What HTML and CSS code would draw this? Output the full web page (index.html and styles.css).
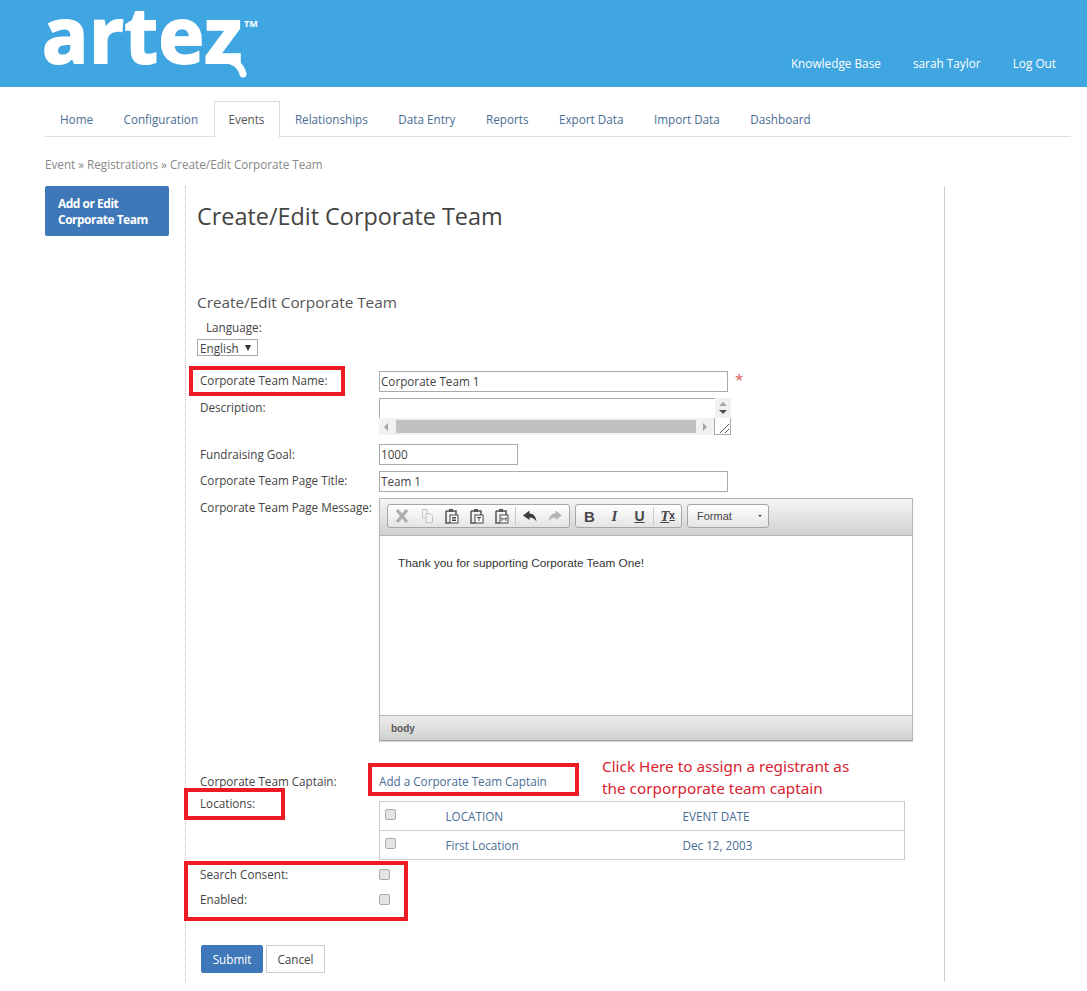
FILE: index.html
```html
<!DOCTYPE html>
<html lang="en">
<head>
    <meta charset="UTF-8">
    <title>Create/Edit Corporate Team</title>
    <link rel="stylesheet" href="styles.css">
</head>
<body>

    <header class="top-bar">
        <div class="logo">
            <span class="logo-word">artez</span>
            <svg class="logo-tail" width="34" height="26" viewBox="0 0 34 26"><path d="M4 3 C12 3 20 8 22 17" fill="none" stroke="#fff" stroke-width="7" stroke-linecap="round"/></svg>
            <span class="logo-tm">TM</span>
        </div>
        <nav class="user-links">
            <a href="#">Knowledge Base</a>
            <a href="#">sarah Taylor</a>
            <a href="#">Log Out</a>
        </nav>
    </header>

    <ul class="tabs">
        <li><a href="#">Home</a></li>
        <li><a href="#">Configuration</a></li>
        <li class="active"><a href="#">Events</a></li>
        <li><a href="#">Relationships</a></li>
        <li><a href="#">Data Entry</a></li>
        <li><a href="#">Reports</a></li>
        <li><a href="#">Export Data</a></li>
        <li><a href="#">Import Data</a></li>
        <li><a href="#">Dashboard</a></li>
    </ul>

    <div class="breadcrumb">Event » Registrations » Create/Edit Corporate Team</div>

    <div class="page">
        <aside class="side-nav">
            <a href="#">Add or Edit<br>Corporate Team</a>
        </aside>

        <main class="content">
            <h1>Create/Edit Corporate Team</h1>
            <h2>Create/Edit Corporate Team</h2>

            <div class="language">
                <div class="language-label">Language:</div>
                <div class="fake-select"><span>English</span><i class="arrow"></i></div>
            </div>

            <div class="row row-name">
                <label>Corporate Team Name:</label>
                <div class="input wide">Corporate Team 1</div>
                <span class="required">*</span>
            </div>

            <div class="row row-desc">
                <label>Description:</label>
                <div class="textarea">
                    <div class="textarea-top">
                        <div class="textarea-text"></div>
                        <div class="vscroll"><i class="up"></i><i class="down"></i></div>
                    </div>
                    <div class="textarea-bottom">
                        <div class="hscroll">
                            <i class="left"></i>
                            <div class="thumb"></div>
                            <i class="right"></i>
                        </div>
                        <div class="grip">
                            <svg width="17" height="17" viewBox="0 0 17 17"><path d="M6 15 L15 6 M11 15 L15 11" stroke="#555" stroke-width="1"/></svg>
                        </div>
                    </div>
                </div>
            </div>

            <div class="row row-goal">
                <label>Fundraising Goal:</label>
                <div class="input short">1000</div>
            </div>

            <div class="row row-title">
                <label>Corporate Team Page Title:</label>
                <div class="input wide">Team 1</div>
            </div>

            <div class="row row-message">
                <label>Corporate Team Page Message:</label>
                <div class="editor">
                    <div class="editor-toolbar">
                        <div class="tool-group group-edit">
                            <span class="tool"><svg width="16" height="16" viewBox="0 0 16 16"><path d="M3 2 L13 14 M13 2 L3 14" stroke="#aeaeae" stroke-width="3.2"/></svg></span>
                            <span class="tool"><svg width="16" height="16" viewBox="0 0 16 16"><path d="M3.5 1.5 H8 V5 M3.5 1.5 V10 H6 M7 5.5 H11 L13.5 8 V14.5 H7 Z" fill="#f4f4f4" stroke="#c2c2c2"/></svg></span>
                            <span class="tool"><svg width="16" height="16" viewBox="0 0 16 16"><path d="M2 3 H12 V7 M2 3 V15 H6" fill="none" stroke="#555" stroke-width="1.5"/><rect x="5" y="1" width="4" height="3" fill="#555"/><rect x="6" y="7" width="8" height="8" fill="#fff" stroke="#444"/><path d="M8 9.5 H12 M8 11 H12 M8 12.5 H12" stroke="#444"/></svg></span>
                            <span class="tool"><svg width="16" height="16" viewBox="0 0 16 16"><path d="M2 3 H12 V7 M2 3 V15 H6" fill="none" stroke="#555" stroke-width="1.5"/><rect x="5" y="1" width="4" height="3" fill="#555"/><rect x="6" y="7" width="8" height="8" fill="#fff" stroke="#444"/><path d="M8 9.5 H12 M10 9.5 V13" stroke="#444"/></svg></span>
                            <span class="tool"><svg width="16" height="16" viewBox="0 0 16 16"><path d="M2 3 H12 V7 M2 3 V15 H6" fill="none" stroke="#555" stroke-width="1.5"/><rect x="5" y="1" width="4" height="3" fill="#555"/><rect x="6" y="7" width="8" height="8" fill="#fff" stroke="#444"/><path d="M8 13 V9.5 L10 11.5 L12 9.5 V13" fill="none" stroke="#444"/></svg></span>
                            <span class="tool-sep"></span>
                            <span class="tool"><svg width="16" height="16" viewBox="0 0 16 16"><path d="M7.5 2.5 L1 7.5 L7.5 12 V9.5 C10.5 9.5 12.5 11 14.5 13.5 C14 9 11.5 5.5 7.5 5.5 Z" fill="#3c3c3c"/></svg></span>
                            <span class="tool"><svg width="16" height="16" viewBox="0 0 16 16"><path d="M8.5 2.5 L15 7.5 L8.5 12 V9.5 C5.5 9.5 3.5 11 1.5 13.5 C2 9 4.5 5.5 8.5 5.5 Z" fill="#b4b4b4"/></svg></span>
                        </div>
                        <div class="tool-group group-style">
                            <span class="tool glyph bold">B</span>
                            <span class="tool glyph italic">I</span>
                            <span class="tool glyph underline">U</span>
                            <span class="tool-sep"></span>
                            <span class="tool glyph clear">T<sub>x</sub></span>
                        </div>
                        <div class="tool-group group-format">
                            <span>Format</span>
                            <i class="format-arrow"></i>
                        </div>
                    </div>
                    <div class="editor-body"><p>Thank you for supporting Corporate Team One!</p></div>
                    <div class="editor-status">body</div>
                </div>
            </div>

            <div class="row row-captain">
                <label>Corporate Team Captain:</label>
                <a href="#">Add a Corporate Team Captain</a>
            </div>

            <div class="row row-locations">
                <label>Locations:</label>
                <table class="locations">
                    <tr>
                        <td class="check"><input type="checkbox"></td>
                        <td class="loc">LOCATION</td>
                        <td>EVENT DATE</td>
                    </tr>
                    <tr>
                        <td class="check"><input type="checkbox"></td>
                        <td class="loc">First Location</td>
                        <td>Dec 12, 2003</td>
                    </tr>
                </table>
            </div>

            <div class="row row-check">
                <label>Search Consent:</label>
                <input type="checkbox">
            </div>
            <div class="row row-check">
                <label>Enabled:</label>
                <input type="checkbox">
            </div>

            <div class="actions">
                <a class="btn btn-primary" href="#">Submit</a>
                <a class="btn" href="#">Cancel</a>
            </div>
        </main>
    </div>

    <!-- annotations drawn on top of the screenshot -->
    <div class="mark mark-name"></div>
    <div class="mark mark-captain"></div>
    <div class="mark mark-locations"></div>
    <div class="mark mark-checks"></div>
    <div class="note">Click Here to assign a registrant as<br>the corporporate team captain</div>

</body>
</html>
```

FILE: styles.css
```css
html, body {
    height: 991px;
    overflow: hidden;
}
body {
    margin: 0;
    position: relative;
    background-color: #fff;
    color: #444;
    font-family: "Open Sans", Arial, sans-serif;
    font-size: 11.7px;
}
a {
    color: #4a6d94;
    text-decoration: none;
}

/* header */
.top-bar {
    height: 87px;
    background-color: #3fa6e2;
    display: flex;
    justify-content: space-between;
    padding: 0 31px 0 45px;
}
.logo {
    position: relative;
    width: 225px;
}
.logo-word {
    display: block;
    color: #fff;
    font-family: "Open Sans", sans-serif;
    font-weight: 700;
    font-size: 77px;
    line-height: 77px;
    margin: -5px 0 0 -3px;
    letter-spacing: 0.5px;
    -webkit-text-stroke: 2px #fff;
}
.logo-tail {
    position: absolute;
    left: 176px;
    top: 57px;
}
.logo-tm {
    position: absolute;
    left: 199px;
    top: 17px;
    color: #fff;
    font-size: 9px;
    font-weight: 700;
}
.user-links {
    display: flex;
    gap: 32px;
    padding-top: 54px;
}
.user-links a {
    color: #fff;
    font-size: 11.8px;
    line-height: 18px;
}

/* tabs */
.tabs {
    list-style: none;
    display: flex;
    margin: 14px 16px 0 45px;
    padding: 0;
    height: 35px;
    border-bottom: 1px solid #ddd;
}
.tabs li {
    height: 35px;
}
.tabs a {
    display: block;
    padding: 0 15.5px 0 15px;
    height: 35px;
    line-height: 37px;
}
.tabs .active a {
    padding: 0 14.5px 0 14px;
    background-color: #fff;
    color: #555;
    border: 1px solid #ddd;
    border-bottom-color: #fff;
    height: 35px;
    line-height: 35px;
}

.breadcrumb {
    margin: 18px 0 0 45px;
    color: #888;
    line-height: 18px;
}

/* page columns */
.page {
    display: flex;
    margin: 13px 0 0 45px;
}
.side-nav {
    width: 124px;
    margin-right: 16px;
}
.side-nav a {
    display: block;
    height: 50px;
    box-sizing: border-box;
    padding: 10px 13px;
    background-color: #3f78b8;
    border-radius: 2px;
    color: #fff;
    font-weight: 700;
    font-size: 12px;
    line-height: 16px;
    letter-spacing: -0.5px;
}
.content {
    width: 760px;
    height: 796px;
    box-sizing: border-box;
    padding-left: 11px;
    border-left: 1px dotted #bbb;
    border-right: 1px solid #ccc;
}
h1 {
    margin: 15px 0 0;
    font-size: 23.4px;
    font-weight: 400;
    line-height: 30px;
    color: #444;
}
h2 {
    margin: 60px 0 0;
    font-size: 15.3px;
    font-weight: 400;
    line-height: 22px;
    color: #555;
}

.language {
    margin-top: 5px;
}
.language-label {
    padding-left: 9px;
    line-height: 18px;
}
.fake-select {
    display: flex;
    align-items: center;
    justify-content: space-between;
    height: 17px;
    width: 61px;
    box-sizing: border-box;
    border: 1px solid #aaa;
    padding: 0 6px 0 2px;
    margin-top: 3px;
}
.arrow {
    width: 0;
    height: 0;
    border-left: 3.5px solid transparent;
    border-right: 3.5px solid transparent;
    border-top: 6px solid #333;
}

/* form rows */
.row {
    display: flex;
    align-items: flex-start;
    padding-left: 3px;
}
.row label {
    width: 179px;
    flex: none;
    line-height: 18px;
    white-space: nowrap;
}
.row-name {
    margin-top: 15px;
}
.row-desc {
    margin-top: 6px;
}
.row-goal {
    margin-top: 9px;
}
.row-goal label {
    padding-top: 1px;
}
.row-title,
.row-message {
    margin-top: 6px;
}
.input {
    box-sizing: border-box;
    height: 21px;
    line-height: 19px;
    border: 1px solid #aaa;
    padding-left: 1px;
}
.input.wide {
    width: 349px;
}
.input.short {
    width: 139px;
}
.required {
    color: #d9534f;
    font-size: 15px;
    line-height: 16px;
    margin-left: 7px;
}

/* description box with its scrollbars */
.textarea {
    width: 352px;
    height: 37px;
}
.textarea-top {
    display: flex;
    height: 20px;
}
.textarea-text {
    flex: 1;
    border: 1px solid #aaa;
    border-bottom: 0;
    border-right: 0;
}
.vscroll {
    width: 16px;
    background-color: #f1f1f1;
    display: flex;
    flex-direction: column;
    align-items: center;
    justify-content: center;
    gap: 4px;
}
.vscroll i {
    width: 0;
    height: 0;
    border-left: 4px solid transparent;
    border-right: 4px solid transparent;
}
.vscroll .up {
    border-bottom: 4px solid #a3a3a3;
}
.vscroll .down {
    border-top: 4px solid #505050;
}
.textarea-bottom {
    display: flex;
    height: 17px;
}
.hscroll {
    flex: 1;
    display: flex;
    align-items: center;
    background-color: #f1f1f1;
    padding: 0 7px 0 5px;
}
.hscroll i {
    width: 0;
    height: 0;
    border-top: 4px solid transparent;
    border-bottom: 4px solid transparent;
}
.hscroll .left {
    border-right: 4px solid #a3a3a3;
}
.hscroll .right {
    border-left: 4px solid #a3a3a3;
}
.thumb {
    flex: 1;
    height: 13px;
    background-color: #c1c1c1;
    margin: 0 7px 0 8px;
}
.grip {
    width: 17px;
    height: 17px;
    box-sizing: border-box;
    border-left: 1px solid #aaa;
    background-color: #fff;
    border-bottom: 1px solid #aaa;
    border-right: 1px solid #aaa;
}
.grip svg {
    display: block;
    margin-left: -1px;
}

/* rich text editor */
.editor {
    width: 534px;
    height: 243px;
    box-sizing: border-box;
    border: 1px solid #b6b6b6;
    border-bottom-color: #a0a0a0;
    box-shadow: 0 1px 1px rgba(0, 0, 0, 0.15);
    display: flex;
    flex-direction: column;
}
.editor-toolbar {
    height: 37px;
    flex: none;
    box-sizing: border-box;
    padding: 5px 0 0 7px;
    display: flex;
    gap: 5px;
    background: linear-gradient(#f5f5f5, #cfd1cf);
    border-bottom: 1px solid #b6b6b6;
}
.tool-group {
    height: 24px;
    box-sizing: border-box;
    border: 1px solid #a6a6a6;
    border-radius: 3px;
    background: linear-gradient(#fff, #e4e4e4);
    display: flex;
    align-items: center;
}
.group-edit {
    width: 183px;
    padding-left: 1px;
}
.group-style {
    width: 107px;
    padding-left: 1px;
}
.group-format {
    width: 82px;
    justify-content: space-between;
    padding: 0 6px 0 9px;
    font-family: "Liberation Sans", Arial, sans-serif;
    font-size: 11px;
    color: #484848;
}
.format-arrow {
    width: 0;
    height: 0;
    border-left: 2px solid transparent;
    border-right: 2px solid transparent;
    border-top: 2px solid #444;
}
.tool {
    width: 25px;
    height: 22px;
    flex: none;
    display: flex;
    align-items: center;
    justify-content: center;
}
.tool-sep {
    width: 1px;
    height: 18px;
    flex: none;
    background-color: #c8c8c8;
    margin: 0 1px 0 1px;
}
.glyph {
    font-family: "Liberation Sans", Arial, sans-serif;
    font-size: 15px;
    font-weight: 700;
    color: #474747;
}
.italic {
    font-family: "Liberation Serif", serif;
    font-style: italic;
}
.underline {
    text-decoration: underline;
    font-size: 14px;
}
.clear {
    font-family: "Liberation Serif", serif;
    font-style: italic;
    text-decoration: underline;
}
.clear sub {
    font-family: "Liberation Sans", Arial, sans-serif;
    font-style: normal;
    font-size: 10px;
    line-height: 0;
    color: #333;
}
.editor-body {
    flex: 1;
    font-family: "Liberation Sans", Arial, sans-serif;
    color: #333;
    padding: 0 18px;
}
.editor-body p {
    margin: 18px 0 0;
    font-size: 11.75px;
    line-height: 17px;
}
.editor-status {
    height: 25px;
    flex: none;
    box-sizing: border-box;
    padding-left: 11px;
    line-height: 25px;
    font-family: "Liberation Sans", Arial, sans-serif;
    font-size: 10px;
    font-weight: 700;
    color: #595959;
    background: linear-gradient(#ececec, #cfd1cf);
    border-top: 1px solid #b6b6b6;
}

/* captain, locations */
.row-captain {
    margin-top: 31px;
    height: 22px;
    line-height: 18px;
}
.locations {
    width: 526px;
    height: 59px;
    margin-top: 7px;
    border-collapse: collapse;
    border: 1px solid #ccc;
    color: #4a6d94;
}
.locations td {
    border-top: 1px solid #ccc;
    padding: 0;
    height: 28px;
}
.locations .check {
    width: 66px;
    padding-left: 5px;
    box-sizing: border-box;
}
.locations .loc {
    width: 237px;
}
input[type="checkbox"] {
    appearance: none;
    width: 11px;
    height: 11px;
    margin: 4px 0 0;
    border: 1px solid #aaa;
    border-radius: 2px;
    background-color: #e4e4e4;
}
.locations input[type="checkbox"] {
    display: block;
    margin: 0 0 4px;
}
.row-locations + .row-check {
    margin-top: 5px;
}
.row-check {
    height: 25px;
}

.actions {
    display: flex;
    gap: 3px;
    margin: 30px 0 0 4px;
}
.btn {
    box-sizing: border-box;
    width: 59px;
    height: 28px;
    line-height: 27px;
    text-align: center;
    border: 1px solid #ccc;
    color: #444;
    background-color: #fff;
}
.btn-primary {
    width: 62px;
    color: #fff;
    background-color: #3f78b8;
    border-color: #3f78b8;
    border-radius: 2px;
}

/* red callouts */
.mark {
    position: absolute;
    box-sizing: border-box;
    border: 4px solid #ed1c24;
}
.mark-name {
    left: 189px;
    top: 366px;
    width: 156px;
    height: 30px;
}
.mark-captain {
    left: 368px;
    top: 763px;
    width: 211px;
    height: 33px;
}
.mark-locations {
    left: 184px;
    top: 788px;
    width: 101px;
    height: 32px;
}
.mark-checks {
    left: 184px;
    top: 861px;
    width: 224px;
    height: 60px;
}
.note {
    position: absolute;
    left: 602px;
    top: 755px;
    color: #d8232f;
    font-family: "Noto Sans", sans-serif;
    font-size: 15.3px;
    line-height: 22px;
}
```
